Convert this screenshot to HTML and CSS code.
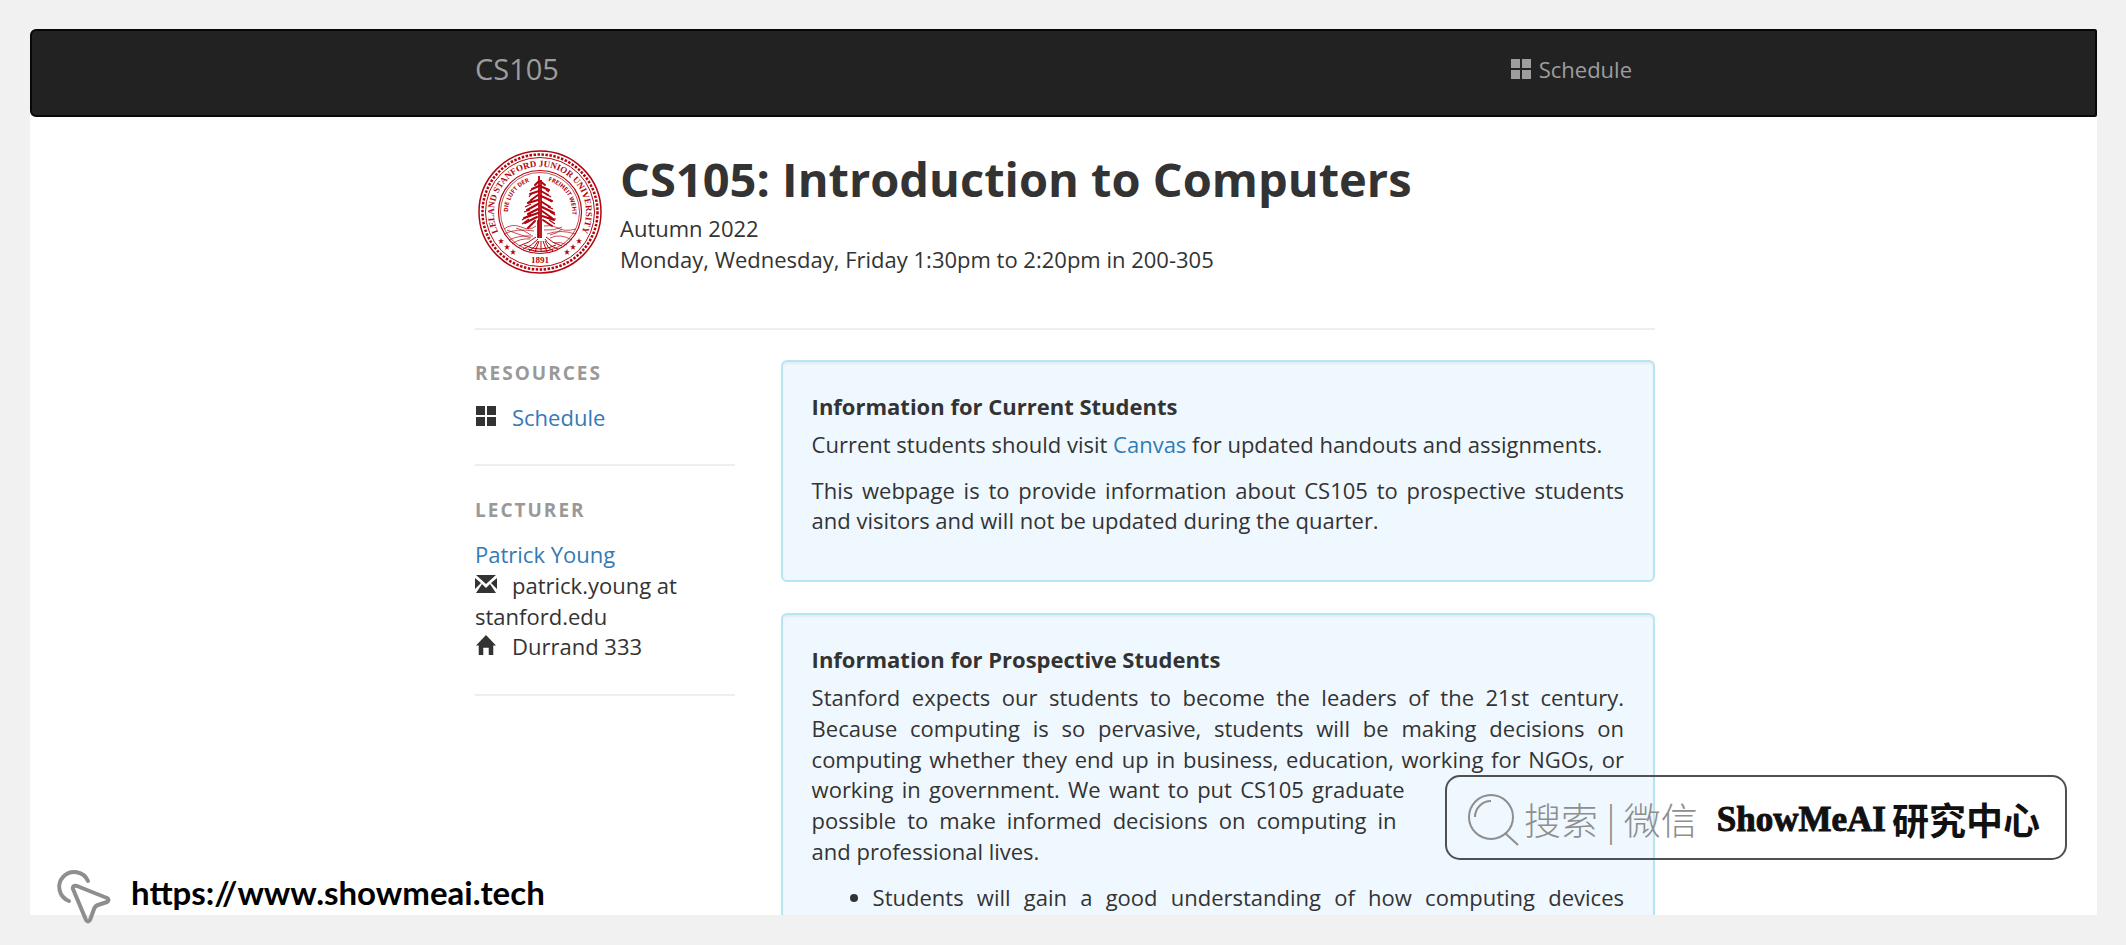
FILE: index.html
```html
<!DOCTYPE html>
<html lang="en">
<head>
    <meta charset="UTF-8">
    <meta name="viewport" content="width=device-width, initial-scale=1.0">
    <title>CS105: Introduction to Computers</title>
    <link rel="stylesheet" href="styles.css">
</head>
<body>

<svg class="defs" width="0" height="0" aria-hidden="true">
    <symbol id="icon-grid" viewBox="0 0 20 20">
        <path d="M0 0h9v9H0zM11 0h9v9h-9zM0 11h9v9H0zM11 11h9v9h-9z"/>
    </symbol>
    <symbol id="icon-mail" viewBox="0 0 22 18">
        <path d="M1 0h20L11 9zM0 3l6 5-6 6zM22 3l-6 5 6 6zM7 9l4 4 4-4 6 9H1z"/>
    </symbol>
    <symbol id="icon-home" viewBox="0 0 22 22">
        <path d="M11 0l11 11.500h-3V22h-5v-8H8v8H3V11.500H0z"/>
    </symbol>
    <symbol id="star" viewBox="0 0 10 10">
        <path d="M5 0l1.300 3.600H10L7 5.900 8.100 9.600 5 7.400 1.900 9.600 3 5.900 0 3.600h3.700z"/>
    </symbol>
</svg>

<div class="page">
    <nav class="navbar">
        <div class="container nav-row">
            <a class="brand" href="#">CS105</a>
            <a class="nav-link" href="#schedule"><svg class="icon-nav"><use href="#icon-grid"/></svg>Schedule</a>
        </div>
    </nav>

    <div class="container">
        <header class="header">
            <svg class="seal" viewBox="0 0 124 124" role="img" aria-label="University seal">
                <defs>
                    <path id="arc-outer" d="M21 83.500A46 46 0 1 1 103 83.500"/>
                    <path id="arc-left" d="M30 62A32 32 0 0 1 62 30"/>
                    <path id="arc-right" d="M70 31A32 32 0 0 1 94 66"/>
                </defs>
                <g fill="none" stroke="#b1040e">
                    <circle cx="62" cy="62" r="61" stroke-width="1.500"/>
                    <circle cx="62" cy="62" r="57.500" stroke-width="2.500" stroke-dasharray="2.500 1.500"/>
                    <circle cx="62" cy="62" r="54.500"/>
                    <circle cx="62" cy="62" r="41.500" stroke-width="1.200"/>
                    <circle cx="62" cy="62" r="39.500" stroke-width="0.700"/>
                    <!-- hills -->
                    <path stroke-width="0.700" d="M26 79q8-6 17-2t15-1M26 84q12-6 30-3M29 80q10 4 24 8M31 90q10-5 24-4M34 94q8-6 18-5M38 78q8 2 15 7M66 76q8-2 14 2t18 1M66 80q10 1 18-3M69 84q14-5 28 0M72 88q10-5 22 2M76 93q6-2 13 2M84 79q-6 5-12 6"/>
                    <!-- ground under the tree -->
                    <path stroke-width="1" d="M41 96q10-3 17-9M45 99q9-3 15-10M51 101q6-3 9-10M57 102l4-11M63 102l0-11M69 102l-4-11M75 101q-6-3-8-10M80 99q-9-3-13-10M84 96q-10-3-16-9M46 95q16 8 32 0M50 99q13 5 25 0"/>
                    <!-- trunk and branches -->
                    <path stroke-width="1.800" d="M61 26v62M63 30v58M60 70v18"/>
                    <path stroke-width="2" stroke-linecap="round" d="M61 31l-4 4M62 31l5 4M61 36l-7 3M62 36l9 4M61 41l-9 3M63 41l7 4M60 45l-7 5M63 46l11 5M60 50l-10 3M64 52l8 5M60 54l-11 6M64 57l12 6M60 59l-10 5M64 61l10 7M60 63l-14 5M64 66l12 4M59 67l-12 6M65 70l9 6M57 71l-7 7"/>
                    <path stroke-width="1.200" d="M56 38l-4 3M68 40l3 2M54 43l-3 4M68 44l5 3M55 49l-6 4M69 49l5 3M53 54l-6 3M70 57l5 2M52 60l-6 2M72 62l5 3M53 64l-9 6M70 68l8 1M51 69l-7 5M71 70l6 4"/>
                </g>
                <g fill="#b1040e">
                    <use href="#star" x="20" y="88" width="6" height="6"/>
                    <use href="#star" x="26" y="94" width="6" height="6"/>
                    <use href="#star" x="32" y="99" width="6" height="6"/>
                    <use href="#star" x="98" y="88" width="6" height="6"/>
                    <use href="#star" x="92" y="94" width="6" height="6"/>
                    <use href="#star" x="86" y="99" width="6" height="6"/>
                    <text class="seal-name"><textPath href="#arc-outer" startOffset="50%">LELAND STANFORD JUNIOR UNIVERSITY</textPath></text>
                    <text class="seal-motto"><textPath href="#arc-left">DIE LUFT DER</textPath></text>
                    <text class="seal-motto"><textPath href="#arc-right">FREIHEIT WEHT</textPath></text>
                    <text class="seal-year" x="62" y="113">1891</text>
                </g>
            </svg>
            <div>
                <h1>CS105: Introduction to Computers</h1>
                <p>Autumn 2022</p>
                <p>Monday, Wednesday, Friday 1:30pm to 2:20pm in 200-305</p>
            </div>
        </header>

        <div class="columns">
            <aside class="sidebar">
                <section>
                    <h2>Resources</h2>
                    <p><svg class="icon"><use href="#icon-grid"/></svg><a href="#schedule">Schedule</a></p>
                </section>
                <section>
                    <h2>Lecturer</h2>
                    <p><a href="#young">Patrick Young</a></p>
                    <p><svg class="icon"><use href="#icon-mail"/></svg>patrick.young at stanford.edu</p>
                    <p><svg class="icon"><use href="#icon-home"/></svg>Durrand 333</p>
                </section>
            </aside>

            <main class="content">
                <section class="well">
                    <h3>Information for Current Students</h3>
                    <p>Current students should visit <a href="#canvas">Canvas</a> for updated handouts and assignments.</p>
                    <p>
                        <span class="line">This webpage is to provide information about CS105 to prospective students</span>
                        and visitors and will not be updated during the quarter.
                    </p>
                </section>
                <section class="well">
                    <h3>Information for Prospective Students</h3>
                    <p>
                        <span class="line">Stanford expects our students to become the leaders of the 21st century.</span>
                        <span class="line">Because computing is so pervasive, students will be making decisions on</span>
                        <span class="line">computing whether they end up in business, education, working for NGOs, or</span>
                        <span class="line short">working in government. We want to put CS105 graduate</span>
                        <span class="line shorter">possible to make informed decisions on computing in</span>
                        and professional lives.
                    </p>
                    <ul>
                        <li><span class="line">Students will gain a good understanding of how computing devices</span></li>
                    </ul>
                </section>
            </main>
        </div>
    </div>
</div>

<a class="site-link" href="https://www.showmeai.tech">
    <svg class="cursor" viewBox="0 0 52 52">
        <path d="M10 30A15 15 0 1 1 29 10"/>
        <path d="M18 15L48 27q3 2 0 4l-9 3q-3 1-4 4l-4 11q-2 3-4 0L14 18q-1-4 4-3z"/>
    </svg>
    https://www.showmeai.tech
</a>

<div class="search-badge">
    <svg class="magnifier" viewBox="0 0 54 54">
        <circle cx="24" cy="24" r="22"/>
        <path d="M8 24A16 16 0 0 1 24 8M38 40l13 12"/>
    </svg>
    <span class="search-hint">搜索 | 微信</span>
    <strong class="search-name">ShowMeAI</strong>
    <strong class="search-center">研究中心</strong>
</div>

</body>
</html>
```
FILE: styles.css
```css
* {
    box-sizing: border-box;
}
body {
    margin: 0;
    padding: 29px 29px 30px 30px;
    height: 100vh;
    overflow: hidden;
    background-color: #f1f1f1;
    color: #333;
    font-family: "Open Sans", "Noto Sans", sans-serif;
    font-size: 22px;
    line-height: 1.4;
}
a {
    color: #337ab7;
    text-decoration: none;
}
h1, h2, h3, p, ul {
    margin: 0;
}
.defs {
    position: absolute;
}
.page {
    height: 100%;
    overflow: hidden;
    background-color: #fff;
}
.container {
    width: 1183px;
    max-width: 100%;
    margin: 0 auto;
    padding-left: 3px;
}

/* top bar */
.navbar {
    padding: 21px 0 28px;
    background-color: #222;
    border: 2px solid #080808;
    border-radius: 6px 2px 2px 6px;
}
.nav-row {
    display: flex;
    justify-content: space-between;
    align-items: center;
    padding-right: 23px;
    height: 35px;
}
.brand, .nav-link {
    color: #9d9d9d;
}
.brand {
    font-size: 29px;
}
.nav-link {
    display: flex;
    align-items: center;
    gap: 8px;
}
.icon-nav {
    width: 20px;
    height: 20px;
    fill: currentColor;
}

/* course title */
.header {
    display: flex;
    gap: 18px;
    height: 213px;
    padding: 33px 0 0 3px;
    border-bottom: 2px solid #eee;
}
.seal {
    flex: none;
    width: 124px;
    height: 124px;
}
.seal-name {
    font-family: "Liberation Serif", serif;
    font-size: 9px;
    font-weight: bold;
    text-anchor: middle;
}
.seal-motto {
    font-size: 6px;
    font-weight: bold;
}
.seal-year {
    font-family: "Liberation Serif", serif;
    font-size: 9px;
    font-weight: bold;
    text-anchor: middle;
}
h1 {
    margin-bottom: 5px;
    font-size: 47px;
    line-height: 58px;
}

/* two columns */
.columns {
    display: flex;
    gap: 46px;
    padding-top: 30px;
}
.sidebar {
    flex: 0 0 22%;
}
.sidebar section {
    padding-bottom: 32px;
    margin-bottom: 31px;
    border-bottom: 2px solid #eee;
}
h2 {
    margin-bottom: 15px;
    color: #999;
    font-size: 19px;
    letter-spacing: 2px;
    text-transform: uppercase;
}
.icon {
    width: 22px;
    height: 20px;
    margin-right: 15px;
    fill: #333;
}
.content {
    flex: 1;
    min-width: 0;
}
.well {
    margin-bottom: 31px;
    padding: 29px;
    background-color: #f0f8ff;
    border: 2px solid #b8e6f0;
    border-radius: 6px;
    box-shadow: inset 0 2px 2px rgba(0, 0, 0, 0.05);
}
.well p {
    margin-bottom: 15px;
}
h3 {
    margin-bottom: 7px;
    font-size: 22px;
}
.line {
    display: block;
    text-align: justify;
    text-align-last: justify;
    white-space: nowrap;
}
.short {
    width: 73%;
}
.shorter {
    width: 72%;
}
.well ul {
    padding-left: 61px;
}

/* overlays */
.site-link {
    position: absolute;
    left: 59px;
    bottom: 22px;
    display: flex;
    align-items: flex-start;
    gap: 20px;
    color: #000;
    font-family: Lato, sans-serif;
    font-size: 33px;
    font-weight: bold;
    line-height: 42px;
}
.cursor {
    width: 52px;
    height: 52px;
    overflow: visible;
    fill: none;
    stroke: #8e8e8e;
    stroke-width: 4;
    stroke-linecap: round;
    stroke-linejoin: round;
}
.search-badge {
    position: absolute;
    right: 59px;
    bottom: 85px;
    display: flex;
    align-items: center;
    width: 622px;
    height: 85px;
    padding: 4px 0 0 20px;
    border: 2px solid #505050;
    border-radius: 15px;
    font-size: 37px;
    white-space: nowrap;
}
.magnifier {
    width: 54px;
    height: 54px;
    fill: none;
    stroke: #8e8e8e;
    stroke-width: 2;
}
.search-hint {
    margin-left: 3px;
    color: #8e8e8e;
    font-family: "Noto Sans CJK SC", sans-serif;
    font-weight: 300;
}
.search-name {
    margin-left: 19px;
    color: #111;
    font-family: "Liberation Serif", serif;
    font-size: 35px;
    -webkit-text-stroke: 1px #111;
}
.search-center {
    margin-left: 6px;
    color: #111;
    font-family: "Noto Sans CJK SC", sans-serif;
}
```
